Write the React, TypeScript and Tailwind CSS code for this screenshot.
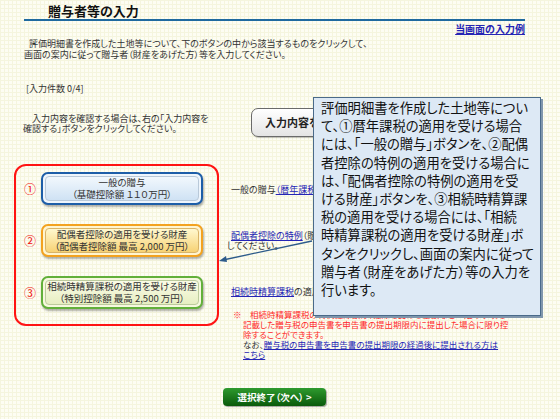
import React from 'react';

const tipLines = [
  '評価明細書を作成した土地等につい',
  'て、①暦年課税の適用を受ける場合',
  'には、「一般の贈与」ボタンを、②配偶',
  '者控除の特例の適用を受ける場合に',
  'は、「配偶者控除の特例の適用を受',
  'ける財産」ボタンを、③相続時精算課',
  '税の適用を受ける場合には、「相続',
  '時精算課税の適用を受ける財産」ボ',
  'タンをクリックし、画面の案内に従って',
  '贈与者（財産をあげた方）等の入力を',
  '行います。',
];

type ChoiceProps = {
  num: string;
  title: string;
  sub: string;
  outer: string;
  inner: string;
};

const Choice: React.FC<ChoiceProps> = ({ num, title, sub, outer, inner }) => (
  <div className="flex items-center">
    <span className="w-[17px] text-[12px] leading-[14px] text-[#f01010]">{num}</span>
    <div className={`w-[162px] h-[33px] rounded-[7px] border-2 p-[2px] shadow-[1px_2px_2px_rgba(0,0,0,0.3)] ${outer}`}>
      <div className={`h-full rounded-[4px] border flex flex-col items-center justify-center text-[9.5px] leading-[11.5px] text-[#333] ${inner}`}>
        <span>{title}</span>
        <span>{sub}</span>
      </div>
    </div>
  </div>
);

const App: React.FC = () => {
  return (
    <div className="relative w-[560px] h-[419px] overflow-hidden bg-[#fdfdf3] bg-[linear-gradient(to_right,#f5f5de_1px,transparent_1px),linear-gradient(to_bottom,#f5f5de_1px,transparent_1px)] bg-[size:4px_4px] font-['Noto_Sans_CJK_JP',sans-serif] text-[#333] [font-feature-settings:'palt']">
      {/* Header */}
      <div className="h-[19px] pl-[48px] pt-[3px] text-[13px] leading-[16px] font-bold text-[#111]">贈与者等の入力</div>
      <div className="ml-[24px] w-[501px] h-[2px] bg-[#1f6a9f]" />
      <div className="mt-[2px] h-[12px] pr-[35px] text-right text-[10px] leading-[12px] font-bold">
        <a className="text-[#2525b5] underline">当画面の入力例</a>
      </div>

      <div className="mt-[3px] pl-[24px] text-[9px] leading-[11px] whitespace-nowrap">
        <p className="indent-[5px]">評価明細書を作成した土地等について、下のボタンの中から該当するものをクリックして、</p>
        <p>画面の案内に従って贈与者（財産をあげた方）等を入力してください。</p>
      </div>

      <div className="mt-[23px] pl-[26px] text-[9px] leading-[11px]">[入力件数 0/4]</div>

      <div className="mt-[14px] flex h-[29px]">
        <div className="ml-[23px] mt-[6px] w-[200px] text-[9px] leading-[10px] whitespace-nowrap">
          <p className="indent-[9px]">入力内容を確認する場合は、右の「入力内容を</p>
          <p>確認する」ボタンをクリックしてください。</p>
        </div>
        <div className="ml-[28px] w-[170px] h-[29px] rounded-[7px] border border-[#6a6a6a] bg-[linear-gradient(to_bottom,#ffffff,#e4e4e4)] pl-[13px] flex items-center text-[11px] font-bold text-[#222] shadow-[1px_1px_1px_rgba(0,0,0,0.25)]">
          入力内容を確認する
        </div>
      </div>

      {/* Main choices */}
      <div className="mt-[27px] flex">
        <div className="ml-[14px] w-[205px] h-[162px] shrink-0 rounded-[12px] border-2 border-[#ff1414] pt-[6px] pl-[8px] flex flex-col gap-[19px]">
          <Choice
            num="①"
            title="一般の贈与"
            sub="（基礎控除額 １１０万円）"
            outer="border-[#1d5ea8] bg-[#eef5fc]"
            inner="border-[#b9c9d9] bg-[linear-gradient(to_bottom,#f2f8fd,#cfe2f4)]"
          />
          <Choice
            num="②"
            title="配偶者控除の適用を受ける財産"
            sub="（配偶者控除額 最高 2,000 万円）"
            outer="border-[#f3a21f] bg-[#fff5d0]"
            inner="border-[#d9b468] bg-[linear-gradient(to_bottom,#fff8cf,#f7d274)]"
          />
          <Choice
            num="③"
            title="相続時精算課税の適用を受ける財産"
            sub="（特別控除額 最高 2,500 万円）"
            outer="border-[#62b03a] bg-[#f6f8de]"
            inner="border-[#bccb9c] bg-[linear-gradient(to_bottom,#fafbe6,#e7eec2)]"
          />
        </div>

        <div className="ml-[8px] w-[290px] text-[9px] whitespace-nowrap">
          <p className="mt-[20px] pl-[4px] leading-[11px]">
            一般の贈与<a className="text-[#2525b5] underline">（暦年課税）</a>の場合は、こちらをクリックしてください。
          </p>
          <div className="mt-[36px] leading-[10px]">
            <p className="pl-[4px]">
              <a className="text-[#2525b5] underline">配偶者控除の特例</a>（贈与税の配偶者控除）の適用を受ける場合はクリック
            </p>
            <p>してください。</p>
          </div>
          <p className="mt-[36px] pl-[4px] leading-[10px]">
            <a className="text-[#2525b5] underline">相続時精算課税</a>の適用を受ける場合はクリックしてください。
          </p>
          <div className="mt-[12px] pl-[16px] leading-[10px] text-[8.5px]">
            <p className="text-[#ff2a2a] -indent-[10px]">※　相続時精算課税の特例控除額は、控除を受ける金額など一定の事項を</p>
            <p className="text-[#ff2a2a]">記載した贈与税の申告書を申告書の提出期限内に提出した場合に限り控</p>
            <p className="text-[#ff2a2a]">除することができます。</p>
            <p className="text-[#333]">
              　なお、<a className="text-[#2525b5] underline">贈与税の申告書を申告書の提出期限の経過後に提出される方は</a>
            </p>
            <p>
              <a className="text-[#2525b5] underline">こちら</a>
            </p>
          </div>
        </div>
      </div>

      <div className="mt-[29px] ml-[223px] w-[103px] h-[18px] rounded-[4px] bg-[linear-gradient(to_bottom,#2e9a2e,#0a5a0a)] flex items-center justify-center text-white text-[9.5px] font-bold shadow-[1px_1px_1px_rgba(0,0,0,0.35)]">
        選択終了（次へ） &gt;
      </div>

      {/* Arrow */}
      <svg className="absolute left-0 top-0 pointer-events-none" width="560" height="419">
        <line x1="312" y1="241" x2="223" y2="260" stroke="#2d5b8a" strokeWidth="1.3" />
        <polygon points="219,261 226,256 227,262" fill="#2d5b8a" />
      </svg>

      {/* Tooltip */}
      <div className="absolute left-[313px] top-[97px] w-[228px] h-[219px] overflow-hidden border border-[#4a6a8a] bg-[#dde9f5] shadow-[2px_2px_0_#7f96ac] pl-[7px] pt-[1px] text-[13.3px] leading-[18.2px] text-[#111] whitespace-nowrap">
        {tipLines.map((l) => (
          <p key={l}>{l}</p>
        ))}
      </div>
    </div>
  );
};

export default App;
